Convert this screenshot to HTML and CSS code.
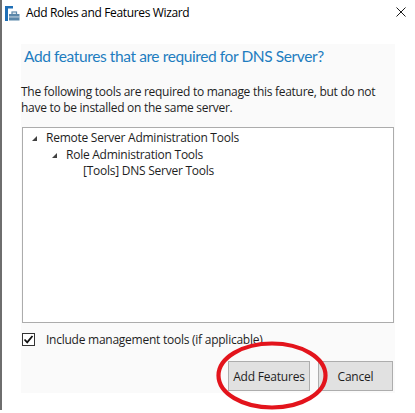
FILE: index.html
```html
<!DOCTYPE html>
<html>
<head>
<meta charset="utf-8">
<link rel="stylesheet" href="styles.css">
</head>
<body>
<div class="window">
  <div class="titlebar">
    <svg class="app-icon" width="15" height="15" viewBox="0 0 15 15">
      <rect x="0" y="0" width="3" height="15" fill="#1f6fb6"/>
      <rect x="0" y="0" width="8" height="2.5" fill="#1f6fb6"/>
      <rect x="4" y="8" width="10.5" height="6.5" fill="#5b87a9"/>
      <rect x="7" y="6" width="4.5" height="2.4" fill="none" stroke="#5b87a9" stroke-width="1.2"/>
      <rect x="4" y="10.5" width="10.5" height="0.9" fill="#d6e2ec"/>
    </svg>
    <span class="title">Add Roles and Features Wizard</span>
    <svg class="close" width="10" height="10" viewBox="0 0 10 10">
      <path d="M0.5 0.5 L9.5 9.5 M9.5 0.5 L0.5 9.5" stroke="#1a1a1a" stroke-width="1"/>
    </svg>
  </div>
  <div class="panel">
    <h1 class="heading">Add features that are required for DNS Server?</h1>
    <p class="desc">The following tools are required to manage this feature, but do not have to be installed on the same server.</p>
    <div class="tree">
      <div class="row lvl0"><span class="tri"></span>Remote Server Administration Tools</div>
      <div class="row lvl1"><span class="tri"></span>Role Administration Tools</div>
      <div class="row lvl2">[Tools] DNS Server Tools</div>
    </div>
    <label class="check-row">
      <span class="checkbox">
        <svg width="11" height="11" viewBox="0 0 11 11"><path d="M1.5 5.5 L4.2 8.3 L9.5 2" fill="none" stroke="#111" stroke-width="1.8"/></svg>
      </span>
      <span>Include management tools (if applicable)</span>
    </label>
    <div class="buttons">
      <button class="btn btn-add">Add Features</button>
      <button class="btn btn-cancel">Cancel</button>
    </div>
  </div>
  <svg class="circle" width="116" height="74" viewBox="0 0 116 74">
    <ellipse cx="57" cy="36.5" rx="53.5" ry="32" fill="none" stroke="#e3141c" stroke-width="4.2"/>
  </svg>
</div>
</body>
</html>
```
FILE: styles.css
```css
html, body {
  margin: 0;
  padding: 0;
  background: #ffffff;
}
body {
  font-family: "Open Sans", "Noto Sans", sans-serif;
  color: #1e1e1e;
  width: 415px;
  height: 413px;
  overflow: hidden;
}
.window {
  position: relative;
  height: 413px;
  border-left: 2px solid #6e6e6e;
  box-sizing: border-box;
}
.titlebar {
  height: 30px;
  display: flex;
  align-items: center;
  padding-left: 3px;
  box-sizing: border-box;
  margin-top: -3px;
}
.app-icon {
  flex: none;
  margin-top: 3px;
}
.title {
  font-size: 12px;
  margin-left: 6px;
  color: #000;
  letter-spacing: -0.35px;
}
.close {
  margin-left: auto;
  margin-right: 9px;
}
.panel {
  margin-left: 19px;
  margin-top: 17px;
  width: 374px;
  height: 349px;
  background: #fafafa;
  padding: 0 1px;
  box-sizing: border-box;
}
.heading {
  margin: 0;
  padding: 1px 0 0 2px;
  font-family: Lato, "Open Sans", sans-serif;
  font-size: 15.5px;
  font-weight: 400;
  line-height: 22px;
  color: #1e7dc0;
  letter-spacing: -0.4px;
}
.desc {
  margin: 17px 0 0 -1px;
  font-size: 12px;
  line-height: 16px;
  letter-spacing: -0.28px;
}
.tree {
  margin-top: 11px;
  height: 196px;
  border: 1px solid #acacac;
  background: #fff;
  box-sizing: border-box;
  padding-top: 2px;
  font-size: 12px;
  letter-spacing: -0.25px;
}
.row {
  height: 16.5px;
  line-height: 16px;
  display: flex;
  align-items: center;
}
.lvl0 { padding-left: 9px; }
.lvl1 { padding-left: 29px; }
.lvl2 { padding-left: 60px; }
.tri {
  width: 0;
  height: 0;
  border-left: 5px solid transparent;
  border-bottom: 5px solid #404040;
  margin-right: 9px;
  margin-top: 1px;
}
.check-row {
  display: flex;
  align-items: center;
  margin-top: 8px;
  font-size: 12px;
  letter-spacing: -0.25px;
}
.checkbox {
  width: 13px;
  height: 13px;
  border: 1px solid #333;
  background: #fff;
  box-sizing: border-box;
  display: flex;
  align-items: center;
  justify-content: center;
  margin-right: 11px;
}
.buttons {
  display: flex;
  justify-content: flex-end;
  gap: 8px;
  margin-top: 13px;
  padding-right: 1px;
}
.btn {
  height: 30px;
  border: 1px solid #adadad;
  background: #e1e1e1;
  font-family: "Open Sans", "Noto Sans", sans-serif;
  font-size: 12px;
  color: #1e1e1e;
  padding: 0;
  letter-spacing: -0.2px;
}
.btn-add { width: 82px; }
.btn-cancel { width: 75px; }
.circle {
  position: absolute;
  left: 213px;
  top: 342px;
}
```
